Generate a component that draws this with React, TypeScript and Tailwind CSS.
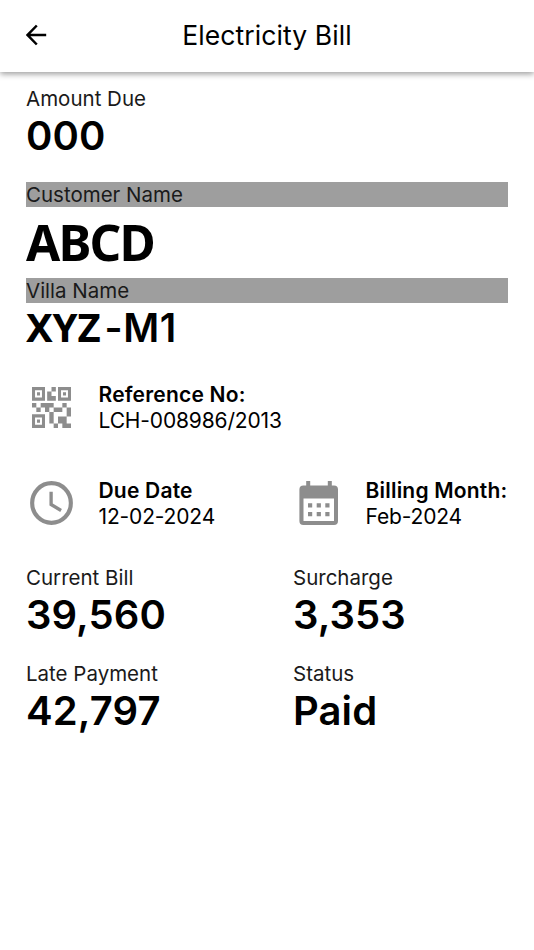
import clsx from 'clsx'

function Field({ label, value, className }: { label: string; value: string; className?: string }) {
  return (
    <div className={clsx('flex flex-col items-start', className)}>
      <span className="text-[20.5px] leading-[26px] text-[#1a1a1a]">{label}</span>
      <span className="text-[40px] leading-[48px] font-semibold tracking-[0.1px]">{value}</span>
    </div>
  )
}

function Info({ title, text }: { title: string; text: string }) {
  return (
    <div className="flex flex-col items-start pl-[0.5px] whitespace-nowrap">
      <span className="text-[21px] leading-[27px] font-semibold tracking-[0.2px]">{title}</span>
      <span className="text-[21px] leading-[26px] tracking-[-0.15px]">{text}</span>
    </div>
  )
}

function Bar({ children }: { children: string }) {
  return (
    <div className="h-[25px] bg-[#9e9e9e] text-[20.5px] leading-[26px] text-[#1a1a1a]">{children}</div>
  )
}

function QrIcon() {
  return (
    <svg className="h-[41px] w-[39px]" viewBox="0 0 18 18" preserveAspectRatio="none" fill="#8d8d8d" fillRule="evenodd">
      <path d="M0 0h6v6H0zM1.4 1.4v3.2h3.2V1.4zM2.3 2.3h1.4v1.4H2.3z" />
      <path d="M12 0h6v6h-6zM13.4 1.4v3.2h3.2V1.4zM14.3 2.3h1.4v1.4h-1.4z" />
      <path d="M0 12h6v6H0zM1.4 13.4v3.2h3.2v-3.2zM2.3 14.3h1.4v1.4H2.3z" />
      <path d="M9 0h2v2H9zM7 2h2v2h2v2H7zM0 7h2v2H0zM2 9h2v2H2zM4 7h6v2H8v2H6V9H4zM10 9h4v2h-4zM8 11h2v5H8zM14 7h2v2h-2zM16 9h2v4h-2zM12 13h4v3h2v2h-4v-2h-2zM10 16h2v2h-2z" />
    </svg>
  )
}

function ClockIcon() {
  return (
    <svg className="h-[44px] w-[43px]" viewBox="0 0 44 44" preserveAspectRatio="none" fill="none" stroke="#8d8d8d">
      <circle cx="22" cy="22" r="19.8" strokeWidth="4.2" />
      <path d="M21.6 10.8v12.7l10.2 6" strokeWidth="3.4" />
    </svg>
  )
}

function CalendarIcon() {
  return (
    <svg className="h-[44px] w-[40px]" viewBox="0 0 40 44" fill="#8d8d8d" fillRule="evenodd">
      <path d="M7.2 0h4v4.5h17.6V0h4v4.5H35a4 4 0 0 1 4 4V40a4 4 0 0 1-4 4H4.4a4 4 0 0 1-4-4V8.5a4 4 0 0 1 4-4h2.8zM4.5 17.5V40H35V17.5z" />
      <path d="M9 22.2h4.2v4.2H9zM17.7 22.2h4.2v4.2h-4.2zM26.3 22.2h4.2v4.2h-4.2zM9 31h4.2v4.2H9zM17.7 31h4.2v4.2h-4.2zM26.3 31h4.2v4.2h-4.2z" />
    </svg>
  )
}

export default function App() {
  return (
    <div className="flex h-[950px] w-full flex-col bg-white font-['Inter',sans-serif] text-black">
      <header className="grid h-[72px] shrink-0 grid-cols-[1fr_auto_1fr] items-center px-[26px] pb-[2px] shadow-[0_2px_6px_rgba(0,0,0,0.4)]">
        <svg className="h-[22px] w-[21px]" viewBox="0 0 21 22" fill="none" stroke="#000" strokeWidth="2.5">
          <path d="M20.2 11H2M10.8 1.5 1.6 11l9.2 9.5" />
        </svg>
        <h1 className="text-[26.5px] leading-[32px] tracking-[0.1px]">Electricity Bill</h1>
      </header>
      <main className="flex flex-col px-[26px] pt-[14px]">
        <Field className="mb-[22px]" label="Amount Due" value="000" />
        <Bar>Customer Name</Bar>
        <div className="h-[71px] font-['Noto_Sans',sans-serif] text-[49.5px] leading-[71px] font-bold tracking-[-1.8px]">ABCD</div>
        <Bar>Villa Name</Bar>
        <div className="flex h-[50px] items-baseline leading-[48px]">
          <span className="font-['Noto_Sans',sans-serif] text-[40px] font-bold tracking-[-0.2px]">XYZ</span>
          <span className="pl-[4px] text-[39px] font-semibold tracking-[0.6px]">-M1</span>
        </div>
        <div className="mt-[28px] flex items-start">
          <div className="w-[72px] pt-[6px] pl-[6px]"><QrIcon /></div>
          <Info title="Reference No:" text="LCH-008986/2013" />
        </div>
        <div className="mt-[43px] grid grid-cols-[267px_1fr]">
          <div className="flex items-start">
            <div className="w-[72px] pt-[4px] pl-[4px]"><ClockIcon /></div>
            <Info title="Due Date" text="12-02-2024" />
          </div>
          <div className="flex items-start">
            <div className="w-[72px] shrink-0 pt-[4px] pl-[6px]"><CalendarIcon /></div>
            <Info title="Billing Month:" text="Feb-2024" />
          </div>
        </div>
        <div className="mt-[35px] grid grid-cols-[267px_1fr] gap-y-[22px]">
          <Field label="Current Bill" value="39,560" />
          <Field label="Surcharge" value="3,353" />
          <Field label="Late Payment" value="42,797" />
          <Field label="Status" value="Paid" />
        </div>
      </main>
    </div>
  )
}
